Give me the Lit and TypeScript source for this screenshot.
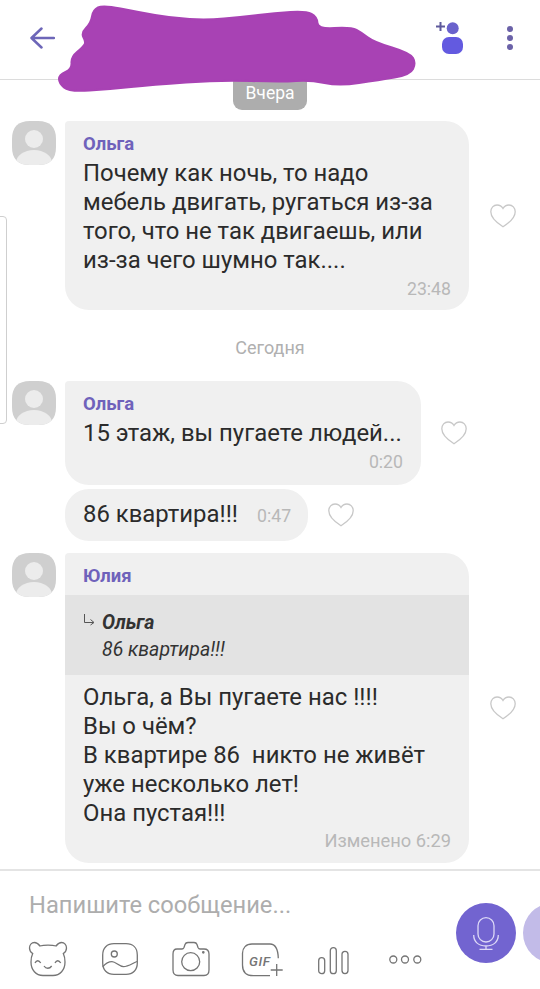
import { LitElement, css, html } from "lit";
import { customElement } from "lit/decorators.js";

// outline of the paint scribble over the contact name, in page coordinates
const scribblePoints = [
  [93, 10], [103, 5], [138, 12], [172, 18], [207, 20], [241, 17], [275, 13], [306, 11],
  [317, 17], [318, 29], [351, 27], [362, 33], [374, 42], [410, 53], [416, 63], [410, 75],
  [379, 80], [339, 86], [310, 80], [282, 82], [220, 80], [152, 85], [110, 89], [69, 92],
  [59, 83], [59, 75], [72, 69], [71, 57], [83, 47], [86, 42], [81, 33], [91, 23],
];

function smoothPath(points: number[][]) {
  const mid = (a: number[], b: number[]) => `${(a[0] + b[0]) / 2} ${(a[1] + b[1]) / 2}`;
  let d = `M${mid(points[points.length - 1], points[0])}`;
  points.forEach((p, i) => {
    d += `Q${p[0]} ${p[1]} ${mid(p, points[(i + 1) % points.length])}`;
  });
  return d + "Z";
}

const avatar = html`<svg class="avatar" viewBox="0 0 44 44">
  <defs>
    <clipPath id="av">
      <path d="M18 0h8c12 0 18 6 18 18v8c0 12-6 18-18 18h-8C6 44 0 38 0 26v-8C0 6 6 0 18 0z" />
    </clipPath>
  </defs>
  <g clip-path="url(#av)">
    <rect width="44" height="44" fill="#cfcfcf" />
    <circle cx="22" cy="18" r="9" fill="#ececec" />
    <ellipse cx="22" cy="42" rx="18" ry="13" fill="#ececec" />
  </g>
</svg>`;

const heart = html`<svg class="heart" viewBox="0 0 26 24" fill="none" stroke="#c8c8c8" stroke-width="1.300">
  <path d="M13 22.800C7 19 .8 14.500 .8 7.800 .8 3.800 3.600 1 7 1c2.600 0 4.800 1.300 6 3.500C14.200 2.300 16.400 1 19 1c3.400 0 6.200 2.800 6.200 6.800 0 6.700-6.200 11.200-12.200 15z" />
</svg>`;

@customElement("app-root")
export class AppRoot extends LitElement {
  static styles = css`
    :host {
      display: block;
      position: relative;
      width: 540px;
      height: 989px;
      overflow: hidden;
      background: #fff;
      font-family: Roboto, "Noto Sans", sans-serif;
      color: #2b2b2b;
    }
    .header {
      height: 80px;
      display: flex;
      align-items: center;
      padding: 0 26px 3px 30px;
      box-sizing: border-box;
      border-bottom: 1px solid #dcdcdc;
      background: #fff;
    }
    .back {
      width: 25px;
      height: 22px;
    }
    .spacer {
      flex: 1;
    }
    .add-user {
      width: 27px;
      height: 32px;
      margin-right: 43px;
    }
    .dots {
      width: 8px;
      height: 26px;
    }
    .scribble {
      position: absolute;
      left: 0;
      top: 0;
      width: 540px;
      height: 100px;
      z-index: 2;
    }
    .edge {
      position: absolute;
      left: -4px;
      top: 216px;
      width: 9px;
      height: 206px;
      border: 1px solid #cfcfcf;
      border-radius: 4px;
    }
    .chat {
      display: flex;
      flex-direction: column;
    }
    .pill-row {
      display: flex;
      justify-content: center;
      height: 41px;
    }
    .pill {
      height: 30px;
      width: 74px;
      box-sizing: border-box;
      padding-top: 3px;
      text-align: center;
      border-radius: 0 0 9px 9px;
      background: #adadad;
      color: #fff;
      font-size: 17.500px;
      line-height: 20px;
    }
    .row {
      display: flex;
      align-items: flex-start;
      padding-left: 12px;
    }
    .row.plain {
      padding-left: 0;
    }
    .avatar {
      width: 44px;
      height: 44px;
      flex: none;
      margin-right: 9px;
    }
    .bubble {
      box-sizing: border-box;
      background: #f0f0f0;
      border-radius: 4px 24px 24px 24px;
      overflow: hidden;
    }
    .heart-cell {
      align-self: center;
      display: flex;
      margin-left: 20px;
    }
    .heart-cell.wide {
      margin-left: 21px;
    }
    .heart {
      width: 26px;
      height: 24px;
    }
    .name {
      padding: 12px 18px 0;
      height: 30px;
      box-sizing: border-box;
      font-size: 18.500px;
      line-height: 22px;
      font-weight: 700;
      color: #6f62bb;
    }
    .text {
      padding: 8px 18px 0;
      font-size: 23.900px;
      line-height: 29px;
      white-space: pre;
    }
    .time {
      text-align: right;
      padding: 4px 18px 0 0;
      font-size: 17.700px;
      line-height: 20px;
      color: #b8b8b8;
    }
    .day {
      text-align: center;
      color: #b0b0b0;
      font-size: 18px;
      line-height: 20px;
      padding: 28px 0 23px;
    }
    .first {
      width: 404px;
      height: 189px;
    }
    .second {
      width: 356px;
      height: 104px;
    }
    .third {
      margin-left: 65px;
      width: 243px;
      height: 52px;
      padding: 11px 0 0 18px;
      border-radius: 24px;
      display: flex;
      align-items: baseline;
      gap: 19px;
      font-size: 23.900px;
      line-height: 29px;
      white-space: nowrap;
    }
    .third .time {
      padding: 0;
    }
    .fourth {
      width: 404px;
      height: 310px;
    }
    .fourth .time {
      padding-top: 3px;
      font-size: 18.300px;
    }
    .quote {
      margin-top: 12px;
      height: 80px;
      background: #e3e3e3;
      display: flex;
      padding: 14px 18px 0;
      box-sizing: border-box;
      font-style: italic;
      font-size: 19.500px;
      line-height: 27px;
      color: #333;
    }
    .quote svg {
      width: 14px;
      height: 14px;
      margin: 4px 5px 0 0;
      flex: none;
    }
    .quote b {
      font-weight: 700;
      display: block;
    }
    .gap-4 {
      height: 4px;
    }
    .gap-12 {
      height: 12px;
    }
    .composer {
      position: absolute;
      left: 0;
      right: 0;
      top: 869px;
      height: 120px;
      box-sizing: border-box;
      border-top: 2px solid #e4e4e4;
      padding: 20px 0 0 29px;
      background: #fff;
    }
    .placeholder {
      font-size: 23.700px;
      line-height: 28px;
      color: #adadad;
    }
    .tools {
      display: grid;
      grid-template-columns: 73px 70px 70px 76px 71px 33px;
      margin-top: 23px;
    }
    .tools svg {
      display: block;
      fill: none;
      stroke: #757575;
      stroke-width: 1.300;
      overflow: visible;
    }
    .bear {
      width: 38px;
      height: 34px;
    }
    .image {
      width: 36px;
      height: 32px;
      margin-top: 1px;
    }
    .camera {
      width: 38px;
      height: 34px;
    }
    .gif {
      position: relative;
      width: 42px;
      height: 34px;
      margin-top: 1px;
    }
    .gif svg {
      width: 42px;
      height: 34px;
    }
    .gif span {
      position: absolute;
      left: 7px;
      top: 11px;
      font-size: 13.500px;
      line-height: 14px;
      font-style: italic;
      font-weight: 500;
      color: #757575;
      letter-spacing: 0.600px;
    }
    .bars {
      width: 31px;
      height: 28px;
      margin-top: 5px;
    }
    .more {
      width: 33px;
      height: 9px;
      margin-top: 13px;
    }
    .mic {
      position: absolute;
      left: 456px;
      top: 32px;
      width: 60px;
      height: 60px;
      border-radius: 50%;
      background: #7264d0;
      display: flex;
      align-items: center;
      justify-content: center;
    }
    .mic svg {
      width: 26px;
      height: 33px;
    }
    .next {
      position: absolute;
      left: 523px;
      top: 32px;
      width: 60px;
      height: 60px;
      border-radius: 50%;
      background: #c2bbe8;
    }
  `;

  render() {
    return html`
      <div class="header">
        <svg class="back" viewBox="0 0 25 22" fill="none" stroke="#6d66b8" stroke-width="2.500" stroke-linecap="round" stroke-linejoin="round">
          <path d="M24 11H2M11.500 1.500 1.500 11l10 9.500" />
        </svg>
        <div class="spacer"></div>
        <svg class="add-user" viewBox="0 0 27 32">
          <path d="M4.500 0v9M0 4.500h9" stroke="#5f5a9c" stroke-width="2" fill="none" />
          <circle cx="16.700" cy="6.300" r="6" fill="#6a62cc" />
          <rect x="6" y="15" width="21" height="17" rx="7" fill="#635ae0" />
        </svg>
        <svg class="dots" viewBox="0 0 8 26" fill="#6b62a8">
          <circle cx="4" cy="4" r="3" />
          <circle cx="4" cy="13" r="3" />
          <circle cx="4" cy="22" r="3" />
        </svg>
      </div>

      <div class="chat">
        <div class="pill-row"><div class="pill">Вчера</div></div>

        <div class="row">
          ${avatar}
          <div class="bubble first">
            <div class="name">Ольга</div>
            <div class="text">Почему как ночь, то надо
мебель двигать, ругаться из-за
того, что не так двигаешь, или
из-за чего шумно так....</div>
            <div class="time">23:48</div>
          </div>
          <div class="heart-cell wide">${heart}</div>
        </div>

        <div class="day">Сегодня</div>

        <div class="row">
          ${avatar}
          <div class="bubble second">
            <div class="name">Ольга</div>
            <div class="text">15 этаж, вы пугаете людей...</div>
            <div class="time">0:20</div>
          </div>
          <div class="heart-cell">${heart}</div>
        </div>
        <div class="gap-4"></div>
        <div class="row plain">
          <div class="bubble third">
            <span>86 квартира!!!</span><span class="time">0:47</span>
          </div>
          <div class="heart-cell">${heart}</div>
        </div>
        <div class="gap-12"></div>

        <div class="row">
          ${avatar}
          <div class="bubble fourth">
            <div class="name">Юлия</div>
            <div class="quote">
              <svg viewBox="0 0 14 14" fill="none" stroke="#555" stroke-width="1">
                <path d="M1.500 1v8.500h9M7.500 6.500l3.500 3-3.500 2.500" />
              </svg>
              <div><b>Ольга</b>86 квартира!!!</div>
            </div>
            <div class="text">Ольга, а Вы пугаете нас !!!!
Вы о чём?
В квартире 86  никто не живёт
уже несколько лет!
Она пустая!!!</div>
            <div class="time">Изменено 6:29</div>
          </div>
          <div class="heart-cell wide">${heart}</div>
        </div>
      </div>

      <div class="edge"></div>

      <svg class="scribble" viewBox="0 0 540 100">
        <path d=${smoothPath(scribblePoints)} fill="#a842b4" stroke="#a842b4" stroke-width="2" />
      </svg>

      <div class="composer">
        <div class="placeholder">Напишите сообщение...</div>
        <div class="tools">
          <svg class="bear" viewBox="0 0 38 34">
            <path d="M11 4C9 1.500 7 .5 5.500 .5 2.500 .5 .5 3 .5 6c0 2.500 1.200 4.300 3.200 5.500C2.500 14 2 17 2 20c0 8 5 13.500 12 13.500h10c7 0 12-5.500 12-13.500 0-3-.5-6-1.700-8.500 2-1.200 3.200-3 3.200-5.500 0-3-2-5.500-5-5.500-1.500 0-3.500 1-5.500 3.500-2-.6-5-.8-8-.8s-6 .2-8 .8z" />
            <path d="M6 21c1.500-3 4-3 5.700 0M26 21c1.500-3 4-3 5.700 0M15 24c2 3 5.500 3 7.700 0" />
          </svg>
          <svg class="image" viewBox="0 0 36 32">
            <path d="M12 .7h12c7 0 11.300 4.300 11.300 11.300v8c0 7-4.300 11.300-11.300 11.300H12C5 31.300 .7 27 .7 20v-8C.7 5 5 .7 12 .7z" />
            <circle cx="12.300" cy="11" r="3" />
            <path d="M.7 23.700C4 20 7 18.700 10 18.700c4 0 7 5 11.500 5 4.500 0 9.500-3.700 13.500-5.200" />
          </svg>
          <svg class="camera" viewBox="0 0 38 34">
            <path d="M5 7h5c1 0 1.500-.5 2-1.500l1-3C13.500 1 14.500 .5 16 .5h6c1.500 0 2.500 .5 3 2l1 3c.5 1 1 1.500 2 1.500h4c3 0 5 2 5 5v16c0 3.500-2 5.500-5 5.500H6c-3 0-5-2-5-5.500V12c0-3 1.500-5 4-5z" />
            <circle cx="18.700" cy="19.700" r="9" />
            <circle cx="31.300" cy="10.300" r=".7" />
          </svg>
          <div class="gif">
            <svg viewBox="0 0 42 34">
              <path d="M36.300 15.300C36 6 33 1 28 1H10C4 1 .5 5 .5 10.300V22c0 7 4 10.700 10.800 10.700H28" />
              <path d="M34.700 21v12M28.700 27h12" />
            </svg>
            <span>GIF</span>
          </div>
          <svg class="bars" viewBox="0 0 31 28">
            <rect x=".7" y="10.700" width="6" height="16" rx="3" />
            <rect x="12.300" y=".7" width="6" height="26" rx="3" />
            <rect x="24" y="4.300" width="6" height="22.300" rx="3" />
          </svg>
          <svg class="more" viewBox="0 0 33 9">
            <circle cx="4.300" cy="4.500" r="3.500" />
            <circle cx="16" cy="4.500" r="3.500" />
            <circle cx="28.300" cy="4.500" r="3.500" />
          </svg>
        </div>
        <div class="mic">
          <svg viewBox="0 0 26 33" fill="none" stroke="#dcd8f6" stroke-width="1.300">
            <rect x="5" y=".7" width="16" height="24.300" rx="8" />
            <path d="M.7 18c0 7 5 11 12.300 11s12.300-4 12.300-11M13 29v3.500M6.500 32.500h13" />
          </svg>
        </div>
        <div class="next"></div>
      </div>
    `;
  }
}
